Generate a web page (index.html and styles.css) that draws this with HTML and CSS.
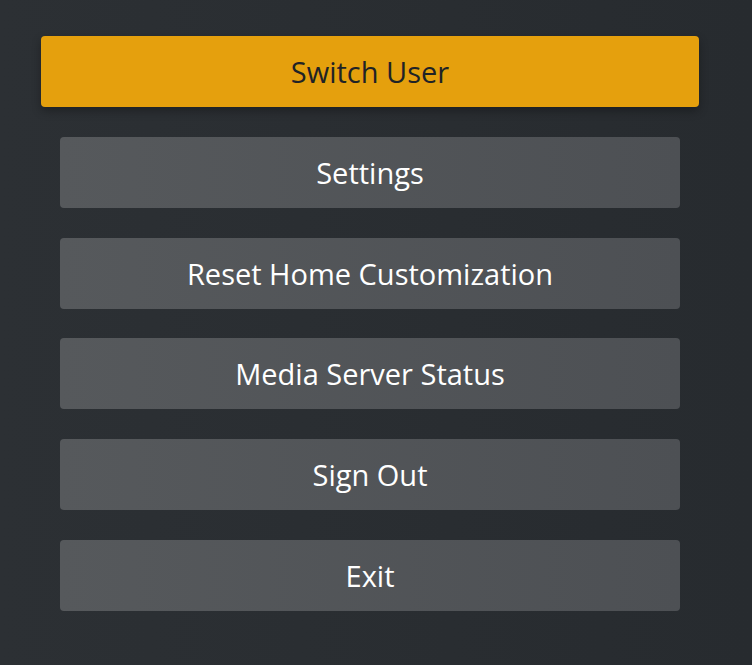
FILE: index.html
```html
<!DOCTYPE html>
<html lang="en">

<head>
    <meta charset="UTF-8">
    <meta name="viewport" content="width=device-width, initial-scale=1.0">
    <title>Menu</title>
    <link rel="stylesheet" href="styles.css">
</head>

<body>
    <div class="menu">
        <button class="item selected">Switch User</button>
        <button class="item">Settings</button>
        <button class="item">Reset Home Customization</button>
        <button class="item">Media Server Status</button>
        <button class="item">Sign Out</button>
        <button class="item">Exit</button>
    </div>
</body>

</html>
```

FILE: styles.css
```css
html,
body {
    margin: 0;
    height: 100%;
}

body {
    background: linear-gradient(90deg, #2c3034 0%, #272b2f 100%);
    font-family: "Open Sans", sans-serif;
}

.menu {
    display: flex;
    flex-direction: column;
    align-items: center;
    gap: 29.75px;
    padding-top: 36px;
    padding-right: 12px;
}

.item {
    width: 620px;
    height: 71px;
    border: none;
    border-radius: 4px;
    background: linear-gradient(90deg, #56595c 0%, #4d5054 100%);
    color: #ffffff;
    font-family: "Open Sans", sans-serif;
    font-size: 29px;
    font-weight: 500;
    padding: 0;
    outline: none;
}

.selected {
    width: 658px;
    background: #e5a00d;
    color: #1f2326;
    box-shadow: 0 4px 10px rgba(0, 0, 0, 0.3);
}
```
